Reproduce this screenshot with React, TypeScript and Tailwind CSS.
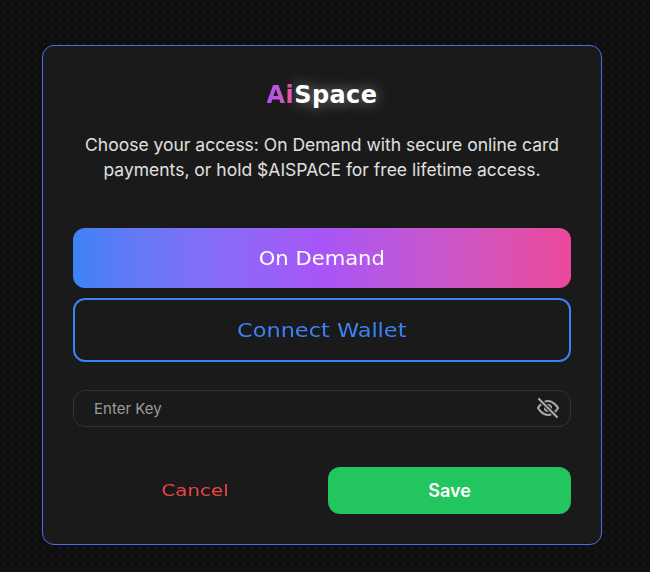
const display = "font-['DejaVu_Sans',sans-serif]";

const EyeSlash = () => (
  <svg
    className="absolute right-[11px] top-[6px]"
    width="24"
    height="24"
    viewBox="0 0 24 24"
    fill="none"
    strokeWidth="2.2"
    strokeLinecap="round"
    strokeLinejoin="round"
  >
    <path d="M2 12s4-7 10-7 10 7 10 7-4 7-10 7-10-7-10-7z" stroke="#a8a8a8" />
    <circle cx="12" cy="12" r="3" stroke="#a8a8a8" />
    <line x1="3" y1="3" x2="21" y2="21" stroke="#1a1a1a" strokeWidth="4.5" />
    <line x1="3" y1="3" x2="21" y2="21" stroke="#a8a8a8" />
  </svg>
);

const App = () => {
  return (
    <div className="w-[650px] h-[572px] overflow-hidden bg-[#0f0f0f] bg-[radial-gradient(#191919_1px,transparent_1px)] bg-[length:8px_8px] pt-[45px] font-['Inter',sans-serif]">
      <div className="ml-[42px] w-[560px] h-[500px] rounded-xl border border-[#5468ee] bg-[#1a1a1a] px-[30px] pt-[30px] flex flex-col">
        <div className="flex justify-center h-[38px] items-center">
          <div className={`${display} text-[24px] leading-none font-bold tracking-[0.4px]`}>
            <span className="bg-gradient-to-r from-[#a855f7] to-[#ec4899] bg-clip-text text-transparent">Ai</span>
            <span className="text-white [text-shadow:0_0_14px_rgba(255,255,255,0.45)]">Space</span>
          </div>
        </div>
        <p className="mt-[18px] text-center text-[17.5px] leading-[25px] text-[#e0e0e0]">
          Choose your access: On Demand with secure online card payments, or hold $AISPACE for free lifetime access.
        </p>
        <button className={`${display} mt-[46px] h-[60px] rounded-xl bg-gradient-to-r from-[#3b82f6] via-[#a855f7] to-[#ec4899] text-white text-[19px]`}>
          <span className="inline-block scale-x-[1.11]">On Demand</span>
        </button>
        <button className={`${display} mt-[10px] h-[64px] rounded-xl border-2 border-[#3b82f6] text-[#3b82f6] text-[19px]`}>
          <span className="inline-block scale-x-[1.18]">Connect Wallet</span>
        </button>
        <div className="relative mt-[28px] h-[37px]">
          <input
            type="text"
            placeholder="Enter Key"
            className="w-full h-full rounded-xl border border-[#333333] bg-[#1a1a1a] pl-5 pr-10 text-[15px] text-white outline-none placeholder:text-[#9a9a9a]"
          />
          <EyeSlash />
        </div>
        <div className="mt-[40px] flex gap-[10px]">
          <button className={`${display} w-[245px] h-[47px] text-[#ef4444] text-[16px]`}>
            <span className="inline-block scale-x-[1.24]">Cancel</span>
          </button>
          <button className="w-[243px] h-[47px] rounded-xl bg-[#22c55e] text-white font-semibold text-lg">Save</button>
        </div>
      </div>
    </div>
  );
};

export default App;
